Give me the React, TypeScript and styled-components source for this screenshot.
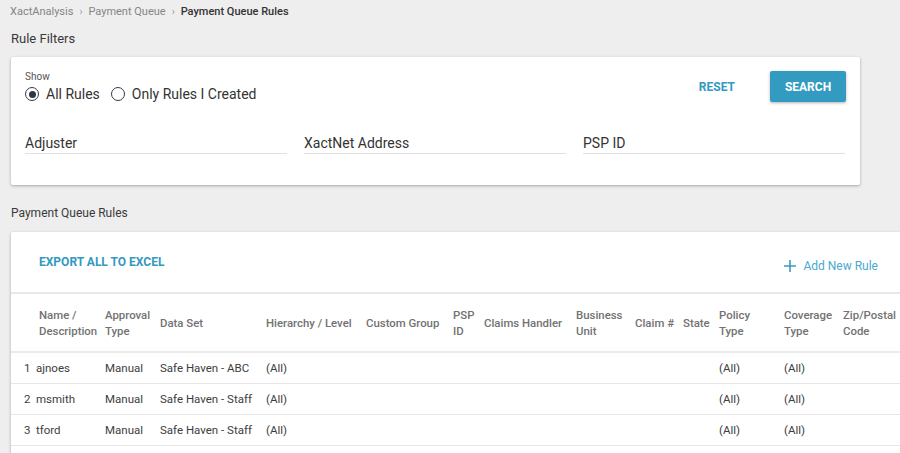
import React, { useState } from "react";
import styled, { createGlobalStyle } from "styled-components";

const GlobalStyle = createGlobalStyle`
  html, body {
    margin: 0;
    padding: 0;
    background: #eeeeee;
    font-family: Roboto, "Liberation Sans", Arial, sans-serif;
    color: #333333;
    overflow: hidden;
  }
  * {
    box-sizing: border-box;
  }
`;

const Page = styled.div`
  width: 900px;
  height: 453px;
  overflow: hidden;
  padding-left: 11px;
`;

const Breadcrumb = styled.div`
  display: flex;
  align-items: center;
  gap: 6px;
  height: 22px;
  margin-left: -1px;
  font-size: 11px;
  color: #808080;
`;

const Crumb = styled.span<{ current?: boolean }>`
  color: ${(p) => (p.current ? "#333333" : "#858585")};
  font-weight: ${(p) => (p.current ? 500 : 400)};
`;

const Chevron = styled.span`
  font-size: 10px;
  color: #999999;
`;

const SectionTitle = styled.div<{ top: number }>`
  font-size: 13px;
  line-height: 18px;
  margin-top: ${(p) => p.top}px;
  margin-bottom: 9px;
  color: #3a3a3a;
`;

const SmallTitle = styled(SectionTitle)`
  font-size: 12px;
  margin-bottom: 10px;
`;

const FilterCard = styled.div`
  width: 849px;
  height: 128px;
  background: #ffffff;
  border-radius: 2px;
  box-shadow: 0 1px 3px rgba(0, 0, 0, 0.3);
  padding: 14px 14px 0 14px;
`;

const TopRow = styled.div`
  display: flex;
  justify-content: space-between;
  align-items: flex-start;
`;

const ShowLabel = styled.div`
  font-size: 10px;
  line-height: 12px;
  color: #555555;
`;

const RadioGroup = styled.div`
  display: flex;
  align-items: center;
  margin-top: 4px;
  height: 14px;
`;

const RadioOption = styled.label`
  display: flex;
  align-items: center;
  gap: 7px;
  margin-right: 11px;
  font-size: 14px;
  color: #333333;
  cursor: pointer;
`;

const RadioCircle = styled.span<{ checked: boolean }>`
  width: 14px;
  height: 14px;
  border-radius: 50%;
  border: 1.5px solid #333a44;
  display: flex;
  align-items: center;
  justify-content: center;
  &::after {
    content: "";
    width: 7px;
    height: 7px;
    border-radius: 50%;
    background: ${(p) => (p.checked ? "#2e3744" : "transparent")};
  }
`;

const Actions = styled.div`
  display: flex;
  align-items: center;
  gap: 35px;
`;

const TextButton = styled.button`
  border: none;
  background: none;
  padding: 0;
  font-family: inherit;
  font-size: 12px;
  font-weight: 700;
  color: #3399bf;
  cursor: pointer;
`;

const PrimaryButton = styled.button`
  width: 76px;
  height: 31px;
  border: none;
  border-radius: 2px;
  background: #349bc0;
  color: #ffffff;
  font-family: inherit;
  font-size: 12px;
  font-weight: 700;
  box-shadow: 0 1px 3px rgba(0, 0, 0, 0.3);
  cursor: pointer;
`;

const FieldRow = styled.div`
  display: flex;
  gap: 17px;
  margin-top: 31px;
`;

const Field = styled.div<{ width: number }>`
  width: ${(p) => p.width}px;
  height: 21px;
  line-height: 20px;
  font-size: 14px;
  color: #333333;
  border-bottom: 1px solid #e0e0e0;
`;

const RulesCard = styled.div`
  width: 930px;
  height: 240px;
  background: #ffffff;
  border-radius: 2px;
  box-shadow: 0 1px 3px rgba(0, 0, 0, 0.3);
`;

const CardHeader = styled.div`
  height: 62px;
  display: flex;
  justify-content: space-between;
  align-items: flex-start;
  padding: 23px 63px 0 28px;
  border-bottom: 2px solid #e8e8e8;
`;

const ExportLink = styled.span`
  font-size: 12px;
  line-height: 14px;
  font-weight: 700;
  color: #3399bf;
`;

const AddLink = styled.span`
  display: flex;
  align-items: center;
  gap: 6px;
  margin-top: 4px;
  font-size: 12px;
  line-height: 14px;
  color: #4aa9d0;
`;

const cols =
  "25px 69px 55px 106px 100px 87px 31px 92px 59px 48px 36px 65px 59px 77px";

const HeadRow = styled.div`
  display: grid;
  grid-template-columns: ${cols};
  align-items: center;
  height: 59px;
  padding-top: 1px;
  border-bottom: 2px solid #ebebeb;
`;

const HeadCell = styled.div<{ pad?: number }>`
  font-size: 11.4px;
  line-height: 16px;
  font-weight: 500;
  color: #727272;
  white-space: nowrap;
  padding-left: ${(p) => p.pad || 0}px;
`;

const BodyRow = styled.div`
  display: grid;
  grid-template-columns: ${cols};
  align-items: center;
  height: 31px;
  border-bottom: 1px solid #e6e6e6;
`;

const Cell = styled.div<{ index?: boolean }>`
  font-size: 11.5px;
  color: #3d3d3d;
  white-space: nowrap;
  padding-left: ${(p) => (p.index ? 13 : 0)}px;
`;

const PlusIcon = () => (
  <svg width="14" height="14" viewBox="0 0 14 14">
    <path d="M7 1v12M1 7h12" stroke="#3a9cc4" strokeWidth="1.6" />
  </svg>
);

const headers = [
  "",
  "Name /\nDescription",
  "Approval\nType",
  "Data Set",
  "Hierarchy / Level",
  "Custom Group",
  "PSP\nID",
  "Claims Handler",
  "Business\nUnit",
  "Claim #",
  "State",
  "Policy\nType",
  "Coverage\nType",
  "Zip/Postal\nCode",
];

const rules = [
  { name: "ajnoes", type: "Manual", set: "Safe Haven - ABC" },
  { name: "msmith", type: "Manual", set: "Safe Haven - Staff" },
  { name: "tford", type: "Manual", set: "Safe Haven - Staff" },
];

export default function App() {
  const [mine, setMine] = useState(false);

  return (
    <Page>
      <GlobalStyle />
      <Breadcrumb>
        <Crumb>XactAnalysis</Crumb>
        <Chevron>›</Chevron>
        <Crumb>Payment Queue</Crumb>
        <Chevron>›</Chevron>
        <Crumb current>Payment Queue Rules</Crumb>
      </Breadcrumb>

      <SectionTitle top={8}>Rule Filters</SectionTitle>
      <FilterCard>
        <TopRow>
          <div>
            <ShowLabel>Show</ShowLabel>
            <RadioGroup>
              <RadioOption onClick={() => setMine(false)}>
                <RadioCircle checked={!mine} />
                All Rules
              </RadioOption>
              <RadioOption onClick={() => setMine(true)}>
                <RadioCircle checked={mine} />
                Only Rules I Created
              </RadioOption>
            </RadioGroup>
          </div>
          <Actions>
            <TextButton>RESET</TextButton>
            <PrimaryButton>SEARCH</PrimaryButton>
          </Actions>
        </TopRow>
        <FieldRow>
          <Field width={262}>Adjuster</Field>
          <Field width={262}>XactNet Address</Field>
          <Field width={262}>PSP ID</Field>
        </FieldRow>
      </FilterCard>

      <SmallTitle top={19}>Payment Queue Rules</SmallTitle>
      <RulesCard>
        <CardHeader>
          <ExportLink>EXPORT ALL TO EXCEL</ExportLink>
          <AddLink>
            <PlusIcon />
            Add New Rule
          </AddLink>
        </CardHeader>
        <HeadRow>
          {headers.map((h, i) => (
            <HeadCell key={i} pad={i === 1 ? 3 : 0}>
              {h.split("\n").map((line, j) => (
                <div key={j}>{line}</div>
              ))}
            </HeadCell>
          ))}
        </HeadRow>
        {rules.map((r, i) => (
          <BodyRow key={r.name}>
            <Cell index>{i + 1}</Cell>
            <Cell>{r.name}</Cell>
            <Cell>{r.type}</Cell>
            <Cell>{r.set}</Cell>
            <Cell>(All)</Cell>
            <Cell />
            <Cell />
            <Cell />
            <Cell />
            <Cell />
            <Cell />
            <Cell>(All)</Cell>
            <Cell>(All)</Cell>
            <Cell />
          </BodyRow>
        ))}
      </RulesCard>
    </Page>
  );
}
